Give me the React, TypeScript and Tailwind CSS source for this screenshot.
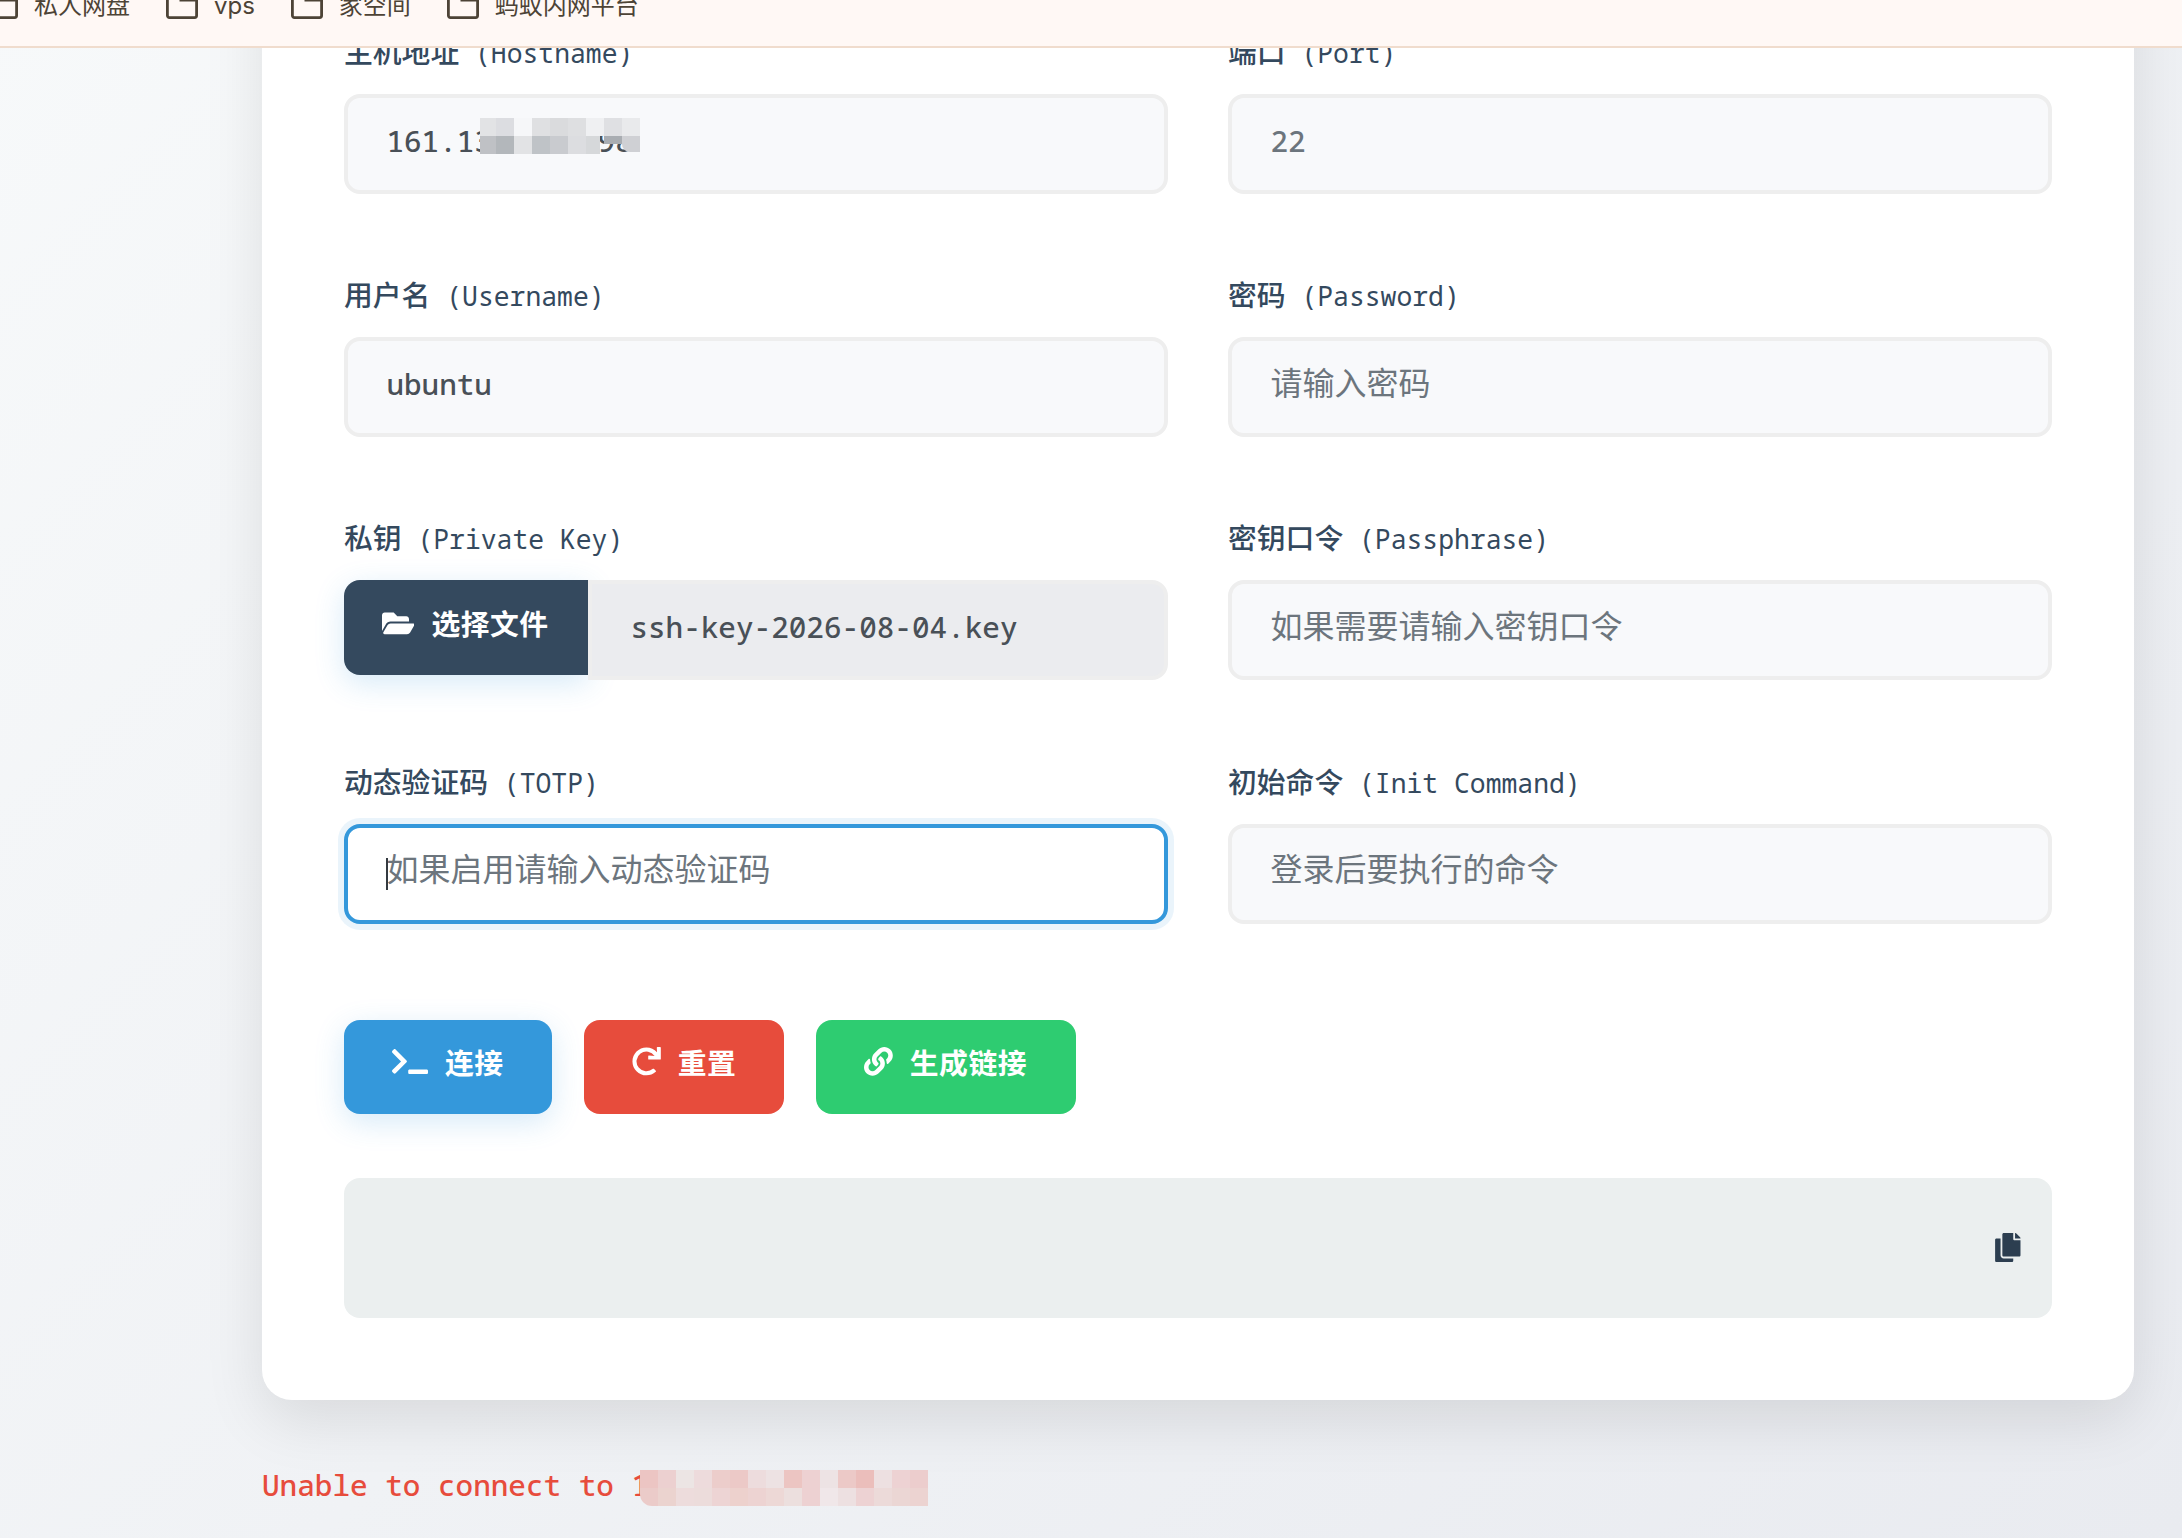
import type { ReactNode } from "react";
import { FaCopy, FaFolderOpen, FaLink, FaRedo, FaTerminal } from "react-icons/fa";

const bookmarks = ["私人网盘", "vps", "家空间", "蚂蚁内网平台"];

// censored part of the host address, two rows of cells
const hostMosaic = [
    ["#e2e3e5", "#dcdde1", "#f6f7f9", "#dfe0e2", "#dadbdd", "#dedfe1", "#eff0f2", "#dfe0e3", "#e9eaec"],
    ["#bfc1c5", "#b3b7bb", "#e2e3e5", "#bfc3c7", "#c9cbcf", "#dcdde0", "#d6d8da", "#a9adb2", "#cfd0d4"],
];

const errorMosaic = [
    ["#ecc5c3", "#ecd0d0", "#ece5e4", "#eddbdc", "#eccdcb", "#ecc9c7", "#eddcdd", "#ede2e3", "#ecc5c2", "#edd1d2", "#ede3e4", "#ecc9c7", "#ebbebb", "#ede0e1", "#edd2d3", "#eccdcd"],
    ["#ebcbc9", "#ebd3cf", "#eddcdc", "#ecdcdb", "#edd4d4", "#edd1cd", "#edd3d2", "#edd8d6", "#ecdfde", "#edd1d2", "#f0e7e9", "#ede0e1", "#edd2d3", "#ecdad9", "#ebd6d4", "#ecd3d1"],
];

const BookmarkFolder = () => (
    <svg width="32" height="26" viewBox="0 0 32 26" fill="none" stroke="#4d4336" strokeWidth="2.8">
        <path d="M3.4 1.4h26.2a1 1 0 0 1 1 1v20.2a2 2 0 0 1-2 2H3.4a2 2 0 0 1-2-2V3.4a2 2 0 0 1 2-2Z" />
        <path d="M14.9 1.4v5.6h15" />
    </svg>
);

const Field = ({ label, hint, children }: { label: string; hint: string; children: ReactNode }) => (
    <div>
        <div className="mb-[23px] flex h-[41px] items-baseline leading-[42px] text-[#34495e]">
            <span className="font-['Noto_Sans_CJK_SC',sans-serif] text-[28.8px] font-medium">{label}</span>
            <span className="ml-[15.8px] font-['Noto_Sans_Mono','DejaVu_Sans_Mono',monospace] text-[26.4px]">({hint})</span>
        </div>
        {children}
    </div>
);

const Box = ({ focused = false, children }: { focused?: boolean; children: ReactNode }) => (
    <div
        className={
            focused
                ? "relative flex h-[100px] items-center rounded-2xl border-4 border-[#3498db] bg-white px-[38.4px] shadow-[0_0_0_6px_rgba(52,152,219,0.1)]"
                : "relative flex h-[100px] items-center rounded-2xl border-4 border-[#eeeeee] bg-[#f8f9fb] px-[38.4px]"
        }
    >
        {children}
    </div>
);

const Value = ({ children }: { children: ReactNode }) => (
    <span className="whitespace-pre pb-[5px] font-['Noto_Sans_Mono','DejaVu_Sans_Mono',monospace] text-[29.33px] font-medium text-[#495057]">
        {children}
    </span>
);

const Placeholder = ({ children }: { children: ReactNode }) => (
    <span className="pb-[13px] font-['Noto_Sans_CJK_SC',sans-serif] text-[32px] text-[#6c757d]">{children}</span>
);

const App = () => {
    return (
        <div className="flex h-[1538px] w-[2182px] flex-col overflow-hidden bg-linear-135 from-[#f7f9fa] to-[#e9ebf0]">
            <header className="h-12 shrink-0 overflow-hidden border-b-2 border-[#f0dccd] bg-[#fff8f5]">
                <div className="-mt-[12px] -ml-[14px] flex h-9 items-center gap-9 font-['Inter','Noto_Sans_CJK_SC',sans-serif] text-2xl text-[#4d4336]">
                    {bookmarks.map((name) => (
                        <div key={name} className="flex items-center gap-4">
                            <BookmarkFolder />
                            <span>{name}</span>
                        </div>
                    ))}
                </div>
            </header>

            <main className="flex-1 overflow-hidden pl-[262px]">
                <section className="-mt-[100px] w-[1872px] rounded-[30px] bg-white px-[82px] pt-[82px] pb-[82px] shadow-[0_20px_60px_rgba(0,0,0,0.1)]">
                    <div className="grid grid-cols-2 gap-x-[60px] gap-y-[79.24px]">
                        <Field label="主机地址" hint="Hostname">
                            <Box>
                                <Value>{"161.13      98"}</Value>
                                <div className="absolute top-5 left-[132px]">
                                    {hostMosaic.map((row, r) => (
                                        <div key={r} className="flex">
                                            {row.map((color, i) => (
                                                <i
                                                    key={i}
                                                    className={
                                                        i === 0
                                                            ? "h-[18px] w-4"
                                                            : r === 1 && i === 7
                                                              ? "h-2 w-[18px]"
                                                              : r === 1 && i === 8
                                                                ? "h-4 w-[18px] rounded-bl-lg"
                                                                : r === 1 && i === 6
                                                                  ? "h-[18px] w-[14px] mr-1"
                                                                  : "h-[18px] w-[18px]"
                                                    }
                                                    style={{ backgroundColor: color }}
                                                />
                                            ))}
                                        </div>
                                    ))}
                                </div>
                            </Box>
                        </Field>
                        <Field label="端口" hint="Port">
                            <Box>
                                <span className="pb-[5px] font-['Noto_Sans_Mono','DejaVu_Sans_Mono',monospace] text-[29.33px] font-medium text-[#6c757d]">22</span>
                            </Box>
                        </Field>

                        <Field label="用户名" hint="Username">
                            <Box><Value>ubuntu</Value></Box>
                        </Field>
                        <Field label="密码" hint="Password">
                            <Box><Placeholder>请输入密码</Placeholder></Box>
                        </Field>

                        <Field label="私钥" hint="Private Key">
                            <div className="flex h-[100px] items-start">
                                <button className="flex h-[95px] w-[244px] items-center gap-[17px] rounded-l-2xl bg-[#34495e] pb-[10px] pl-[38px] text-[28.8px] text-white shadow-[0_8px_30px_rgba(52,152,219,0.2)]">
                                    <FaFolderOpen className="h-[28.8px] w-[32.4px]" />
                                    <span className="font-['Noto_Sans_CJK_SC',sans-serif] font-semibold tracking-[0.5px]">选择文件</span>
                                </button>
                                <div className="relative flex h-[100px] flex-1 items-center rounded-r-2xl border-4 border-[#eeeeee] bg-[#ebecef] pl-[38.4px]">
                                    <Value>ssh-key-2026-08-04.key</Value>
                                </div>
                            </div>
                        </Field>
                        <Field label="密钥口令" hint="Passphrase">
                            <Box><Placeholder>如果需要请输入密钥口令</Placeholder></Box>
                        </Field>

                        <Field label="动态验证码" hint="TOTP">
                            <Box focused>
                                <i className="absolute top-[30px] left-[38px] h-8 w-0.5 bg-[#343a40]" />
                                <Placeholder>如果启用请输入动态验证码</Placeholder>
                            </Box>
                        </Field>
                        <Field label="初始命令" hint="Init Command">
                            <Box><Placeholder>登录后要执行的命令</Placeholder></Box>
                        </Field>
                    </div>

                    <div className="mt-24 flex h-[94px] gap-8 font-['Noto_Sans_CJK_SC',sans-serif] text-[28.8px] font-semibold tracking-[0.5px] text-white">
                        <button className="flex w-[208px] items-center gap-[17px] rounded-2xl bg-[#3498db] pb-[10px] pl-12 shadow-[0_8px_30px_rgba(52,152,219,0.2)]">
                            <FaTerminal className="h-[28.8px] w-9" />
                            <span>连接</span>
                        </button>
                        <button className="flex w-[200px] items-center gap-[17px] rounded-2xl bg-[#e74c3c] pb-[10px] pl-12">
                            <FaRedo />
                            <span>重置</span>
                        </button>
                        <button className="flex w-[260px] items-center gap-[17px] rounded-2xl bg-[#2ecc71] pb-[10px] pl-12">
                            <FaLink />
                            <span>生成链接</span>
                        </button>
                    </div>

                    <div className="mt-16 flex h-[140px] items-center justify-end rounded-2xl bg-[#ebefef] pr-[31px]">
                        <FaCopy className="h-[29px] w-[25.6px] text-[#2c3e50]" />
                    </div>
                </section>

                <div className="mt-[65px] flex h-10 items-start">
                    <span className="whitespace-pre font-['Noto_Sans_Mono','DejaVu_Sans_Mono',monospace] text-[29.33px] leading-10 font-medium text-[#e74c3c]">
                        Unable to connect to 1
                    </span>
                    <div className="relative mt-[5px] -ml-[9px] overflow-hidden rounded-bl-xl">
                        {errorMosaic.map((row, r) => (
                            <div key={r} className="flex">
                                {row.map((color, i) => (
                                    <i key={i} className="h-[18px] w-[18px]" style={{ backgroundColor: color }} />
                                ))}
                            </div>
                        ))}
                    </div>
                </div>
            </main>
        </div>
    );
};

export default App;
